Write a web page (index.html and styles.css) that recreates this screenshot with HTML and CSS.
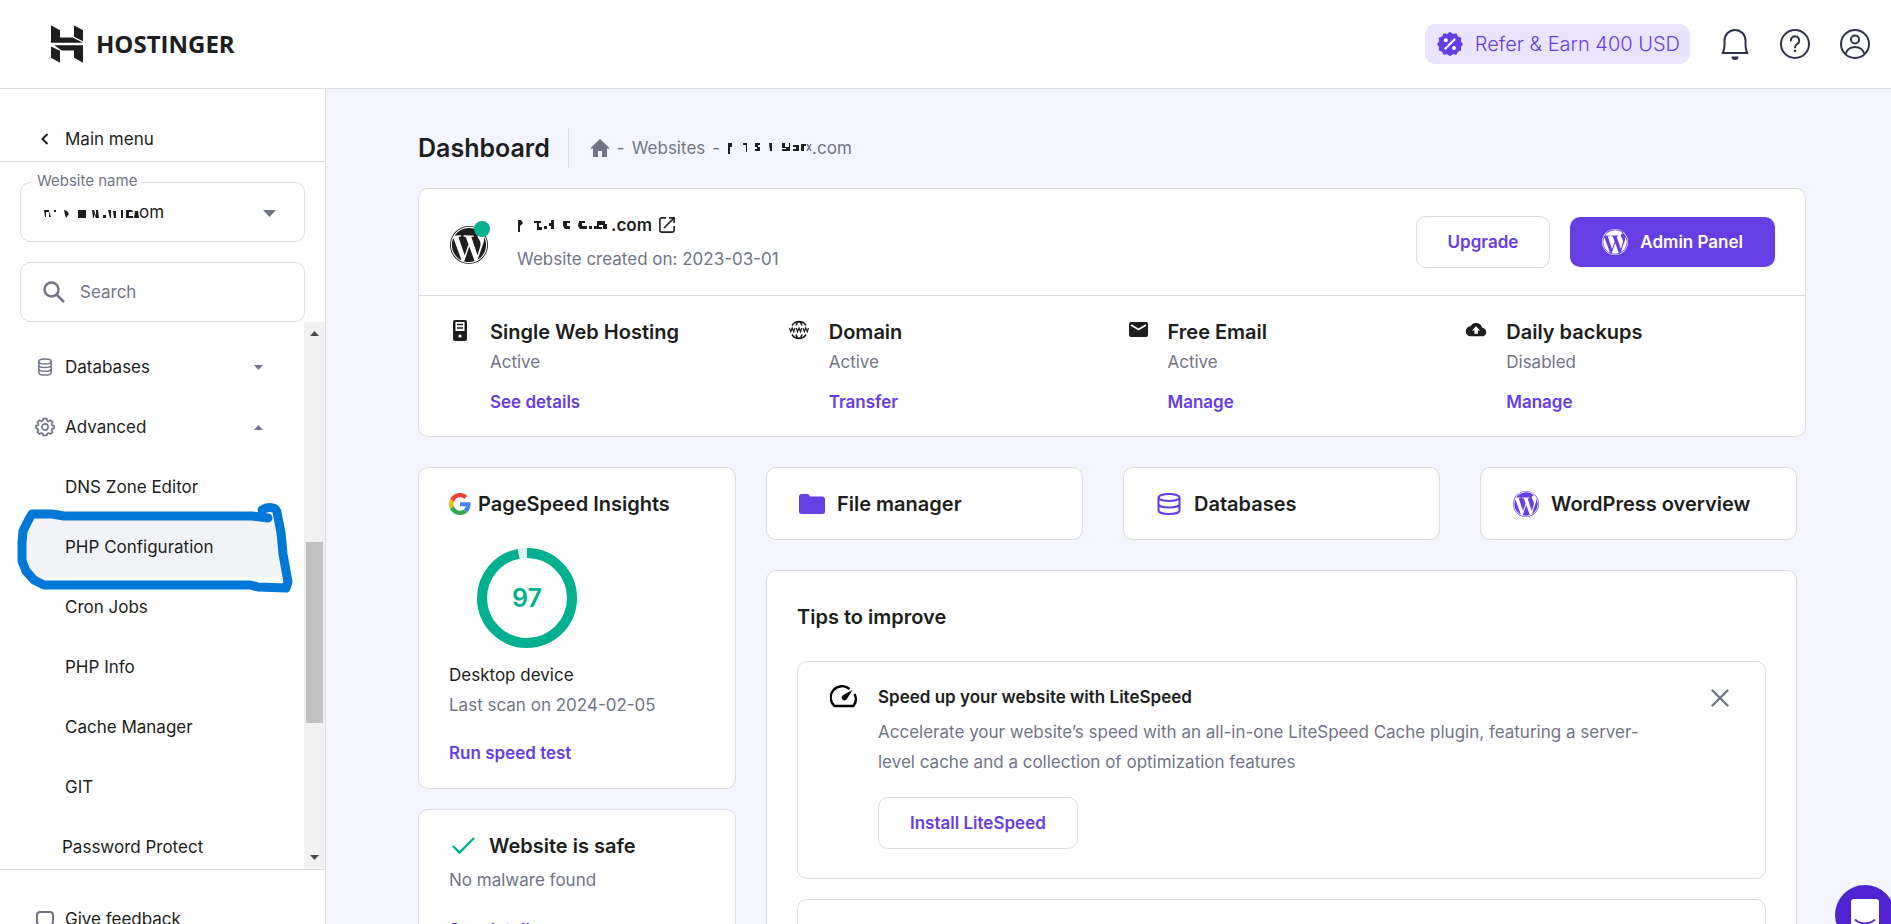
FILE: index.html
```html
<!DOCTYPE html>
<html lang="en">
<head>
<meta charset="utf-8">
<meta name="viewport" content="width=device-width, initial-scale=1">
<title>Dashboard - Hostinger</title>
<link rel="stylesheet" href="styles.css">
</head>
<body>
<svg class="defs" aria-hidden="true">
  <symbol id="wp" viewBox="0 0 24 24"><path d="M21.469 6.825c.84 1.537 1.318 3.3 1.318 5.175 0 3.979-2.156 7.456-5.363 9.325l3.295-9.527c.615-1.54.82-2.771.82-3.864 0-.405-.026-.78-.07-1.11m-7.981.105c.647-.03 1.232-.105 1.232-.105.582-.075.514-.93-.067-.899 0 0-1.755.135-2.88.135-1.064 0-2.85-.15-2.85-.15-.585-.03-.661.855-.075.885 0 0 .54.061 1.125.09l1.68 4.605-2.37 7.08L5.354 6.9c.649-.03 1.234-.1 1.234-.1.585-.075.516-.93-.065-.896 0 0-1.746.138-2.874.138-.2 0-.438-.008-.69-.015C4.911 3.15 8.235 1.215 12 1.215c2.809 0 5.365 1.072 7.286 2.833-.046-.003-.091-.009-.141-.009-1.06 0-1.812.923-1.812 1.914 0 .89.513 1.643 1.06 2.531.411.72.89 1.643.89 2.977 0 .915-.354 1.994-.821 3.479l-1.075 3.585-3.9-11.61.001.014zM12 22.784c-1.059 0-2.081-.153-3.048-.437l3.237-9.406 3.315 9.087c.024.053.05.101.078.149-1.12.393-2.325.609-3.582.609M1.211 12c0-1.564.336-3.05.935-4.39L7.29 21.709C3.694 19.96 1.212 16.271 1.211 12"/><path fill-rule="evenodd" d="M12 0a12 12 0 1 0 0 24 12 12 0 0 0 0-24m0 .55a11.450 11.450 0 1 1 0 22.900 11.450 11.450 0 0 1 0-22.900"/></symbol>
</svg>

<header class="topbar">
  <a class="brand" href="#" aria-label="Hostinger">
    <svg class="brand-mark" width="32" height="38" viewBox="0 0 96 113" aria-hidden="true"><path d="M0 0L27 15V37H65L96 53H0ZM69 0L96 15V48L69 35ZM10 60H96V113L69 98V76H32ZM0 64L27 77V113L0 98Z"/></svg>
    <span>HOSTINGER</span>
  </a>
  <div class="top-actions">
    <a class="refer" href="#">
      <svg width="26" height="26" viewBox="0 0 26 26" aria-hidden="true"><path d="M13 .8l2.900 2.100 3.500-.6 1.500 3.200 3.300 1.300-.2 3.600L26 13l-2 2.900.2 3.500-3.300 1.300-1.500 3.100-3.500-.5L13 25.300l-2.900-2-3.500.5-1.500-3.100-3.300-1.300.2-3.500L0 13l2-2.600-.2-3.600 3.300-1.300 1.500-3.200 3.500.6z" fill="#673de6"/><path d="M8.500 17.500L17.500 8.500" stroke="#fff" stroke-width="2.200" stroke-linecap="round"/><circle cx="8.800" cy="9.200" r="2" fill="#fff"/><circle cx="17" cy="17" r="2" fill="#fff"/></svg>
      <span>Refer &amp; Earn 400 USD</span>
    </a>
    <button class="icon-btn" aria-label="Notifications"><svg width="30" height="32" viewBox="0 0 30 32" fill="none" stroke="#2f334a" stroke-width="2" stroke-linejoin="round"><path d="M2.500 25C5 21.500 4.500 18 4.500 12.500a10.500 10.500 0 0 1 21 0c0 5.500-.5 9 2 12.500z"/><path d="M11.500 28.500h7a3.500 3.500 0 0 1-7 0z" fill="#2f334a" stroke="none"/></svg></button>
    <button class="icon-btn" aria-label="Help"><svg width="30" height="30" viewBox="0 0 30 30" fill="none" stroke="#2f334a" stroke-width="2"><circle cx="15" cy="15" r="14"/><path d="M10.800 11.500a4.200 4.200 0 1 1 6.700 3.300C15.800 16 15 16.700 15 18.500" stroke-linecap="round"/><circle cx="15" cy="22" r="1.300" fill="#2f334a" stroke="none"/></svg></button>
    <button class="icon-btn" aria-label="Account"><svg width="30" height="30" viewBox="0 0 30 30" fill="none" stroke="#2f334a" stroke-width="2"><circle cx="15" cy="15" r="14"/><circle cx="15" cy="10.500" r="4"/><path d="M5.500 25c1.500-4.500 5-7 9.500-7s8 2.500 9.500 7"/></svg></button>
  </div>
</header>

<div class="shell">
  <aside class="sidebar">
    <a class="back" href="#">
      <svg width="8" height="12" viewBox="0 0 8 12" fill="none" stroke="#1d1e20" stroke-width="2" aria-hidden="true"><path d="M6.500 1L1.500 6l5 5"/></svg>
      <span>Main menu</span>
    </a>
    <div class="filters">
      <div class="site-field">
        <label for="site">Website name</label>
        <select id="site"><option>om</option></select>
        <svg class="smudge-select" width="100" height="12" viewBox="0 0 100 12" fill="#1d1e20" aria-hidden="true"><path d="M1 2h5v2H3v5H2zM6 3l2 6H6zM11 2h2v2h-2zM21 2l3 1 2 3-3 4-1-3zM35 2h8v8h-8zM49 2h2l2 6V2h2l1 8h-3l-2-4v4h-1zM60 7h3v3h-3zM65 2h3v8h-1zM70 3h3v7h-2zM78 2h2v8h-2zM83 2h6l1 2h-4v4h4v2h-7zM92 3h3l1 7h-5z"/></svg>
        <svg class="caret" width="13" height="7" viewBox="0 0 13 7" fill="#727586" aria-hidden="true"><path d="M0 0h13L6.500 7z"/></svg>
      </div>
      <div class="search-field">
        <svg width="22" height="22" viewBox="0 0 22 22" fill="none" stroke="#727586" stroke-width="2.500" aria-hidden="true"><circle cx="8.500" cy="8.500" r="7"/><path d="M13.500 13.500L21 21"/></svg>
        <input type="search" placeholder="Search" aria-label="Search">
      </div>
    </div>
    <div class="scroller">
      <nav class="menu">
        <button class="item group">
          <svg width="24" height="18" viewBox="0 0 24 18" fill="none" stroke="#727586" stroke-width="1.500" aria-hidden="true"><ellipse cx="12" cy="3.500" rx="6.200" ry="2.500"/><path d="M5.800 3.500v11c0 1.400 2.800 2.600 6.200 2.600s6.200-1.200 6.200-2.600v-11M5.800 7c0 1.400 2.800 2.500 6.200 2.500s6.200-1.100 6.200-2.500M5.800 10.800c0 1.400 2.800 2.500 6.200 2.500s6.200-1.100 6.200-2.500"/></svg>
          <span>Databases</span>
          <svg class="tri" width="9" height="5" viewBox="0 0 9 5" fill="#727586" aria-hidden="true"><path d="M0 0h9L4.500 5z"/></svg>
        </button>
        <button class="item group">
          <svg width="24" height="22" viewBox="0 0 26 25" fill="none" stroke="#727586" stroke-width="1.900" stroke-linejoin="round" aria-hidden="true"><path d="M11 3h4l.6 2.500 1.400.6 2.200-1.400 2.600 2.600-1.400 2.200.5 1.200 2.400.3v3l-2.400.6-.6 1.300 1.400 2.200-2.500 2.500-2.200-1.300-1.400.6L15 22h-4l-.6-2.100-1.400-.6-2.200 1.300-2.500-2.500 1.300-2.200-.6-1.300L2.700 14v-3l2.400-.3.5-1.200-1.300-2.200 2.500-2.600L9 6.100l1.400-.6z"/><circle cx="13" cy="12.500" r="3.500"/></svg>
          <span>Advanced</span>
          <svg class="tri" width="9" height="5" viewBox="0 0 9 5" fill="#727586" aria-hidden="true"><path d="M0 5h9L4.500 0z"/></svg>
        </button>
        <a class="item" href="#">DNS Zone Editor</a>
        <div class="marked">
          <a class="item active" href="#">PHP Configuration</a>
          <svg class="marker" width="304" height="100" viewBox="0 0 304 100" fill="none" stroke="#0078d7" stroke-width="9" stroke-linecap="round" stroke-linejoin="round" aria-hidden="true"><path d="M268 21L252 19H64L52 17H32L29 22 23 34 22 45V64L26 74 34 83 44 88H250L258 90 286 91 288 85 283 57 281 36 277 15C276 10 268 9 262 13"/></svg>
        </div>
        <a class="item" href="#">Cron Jobs</a>
        <a class="item" href="#">PHP Info</a>
        <a class="item" href="#">Cache Manager</a>
        <a class="item" href="#">GIT</a>
        <a class="item wide" href="#">Password Protect</a>
      </nav>
      <div class="scrollbar" aria-hidden="true">
        <svg width="9" height="5" viewBox="0 0 9 5" fill="#494c4f"><path d="M0 5h9L4.500 0z"/></svg>
        <div class="track"><div class="thumb"></div></div>
        <svg width="9" height="5" viewBox="0 0 9 5" fill="#494c4f"><path d="M0 0h9L4.500 5z"/></svg>
      </div>
    </div>
    <a class="feedback" href="#">
      <svg width="18" height="20" viewBox="0 0 18 20" fill="none" stroke="#727586" stroke-width="2" aria-hidden="true"><path d="M4 1h10a3 3 0 0 1 3 3v7a3 3 0 0 1-3 3h-2l-3 3-3-3H4a3 3 0 0 1-3-3V4a3 3 0 0 1 3-3z"/></svg>
      <span>Give feedback</span>
    </a>
  </aside>

  <main class="content">
    <div class="heading">
      <h1>Dashboard</h1>
      <nav class="crumbs" aria-label="Breadcrumb">
        <a href="#" aria-label="Home"><svg width="20" height="18" viewBox="0 0 20 18" fill="#727586"><path d="M10 0L0 9.500h3V18h5v-6h4v6h5V9.500h3z"/></svg></a>
        <span>-</span>
        <a href="#">Websites</a>
        <span>-</span>
        <span class="masked"><svg width="85" height="16" viewBox="0 0 85 16" fill="#1d1e20" aria-hidden="true"><path d="M1 3h4v4H3v7H1zM16 3h4v9h-1V5h-3zM28 3h5v2h-2v2h2v4h-5V9h2V7h-2zM42 3h3v8h-2zM55 3h3v4h4V3h1v8h-8V9h4V8h-4zM66 5h6v6h-6V9h3V7h-3zM74 4h5v2h-2v5h-3z"/><path d="M80 4l4 7M84 4l-4 7" stroke="#727586" stroke-width="1.500"/></svg>.com</span>
      </nav>
    </div>

    <section class="card overview">
      <div class="site-row">
        <div class="site-logo">
          <svg width="38" height="38" fill="#1d1e20" aria-hidden="true"><use href="#wp"/></svg>
          <span class="status"></span>
        </div>
        <div class="site-info">
          <a class="domain" href="#"><span class="masked"><svg width="94" height="16" viewBox="0 0 94 16" fill="#1d1e20" aria-hidden="true"><path d="M1 3h3l2 3-3 3v6H1zM17 4h7v2h-2v4h3v3h-5V6h-3zM27 9h3v3h-3zM34 3h3v9h-3V9h-2V6h2zM46 4h7v2h-3v3h3v3h-5l-2-3zM62 4h6v2h-3v3h5v3h-7l-2-3zM72 9h3v3h-3zM80 4h8v3h2v5h-4V8h-4v2h3v2h-8V9h3z"/></svg>.com</span>
            <svg width="16" height="16" viewBox="0 0 16 16" fill="none" stroke="#1d1e20" stroke-width="1.600" aria-hidden="true"><path d="M7 .9H2.500A1.600 1.600 0 0 0 .9 2.500v11a1.600 1.600 0 0 0 1.600 1.600h11a1.600 1.600 0 0 0 1.600-1.600V9M10 .9h5.100V6M15 1L5 11"/></svg></a>
          <span class="muted">Website created on: 2023-03-01</span>
        </div>
        <div class="site-actions">
          <button class="btn outline">Upgrade</button>
          <button class="btn solid"><svg width="26" height="26" fill="#fff" aria-hidden="true"><use href="#wp"/></svg>Admin Panel</button>
        </div>
      </div>
      <div class="services">
        <article class="service">
          <svg width="20" height="22" viewBox="0 0 20 22" aria-hidden="true"><rect x="3" width="14" height="21" rx="2" fill="#1d1e20"/><path d="M5.500 2h9v9h-9z" fill="#fff"/><path d="M7 4.500h6M7 8h6" stroke="#1d1e20" stroke-width="1.300"/><circle cx="10" cy="16" r="1.600" fill="#fff"/></svg>
          <div><h2>Single Web Hosting</h2><p>Active</p><a href="#">See details</a></div>
        </article>
        <article class="service">
          <svg width="20" height="20" viewBox="0 0 20 20" fill="none" stroke="#1d1e20" stroke-width="1.500" aria-hidden="true"><path d="M3 5.500C4.500 3 7 1.500 10 1.500S15.500 3 17 5.500M3 14.500c1.500 2.500 4 4 7 4s5.500-1.500 7-4M7 5.500C7.700 3 9 1.700 10 1.700s2.300 1.300 3 3.800M7 14.500c.7 2.500 2 3.800 3 3.800s2.300-1.300 3-3.800"/><path stroke-width="1.200" d="M.5 8l1.200 3.800L3.200 8l1.500 3.800L5.900 8M7.300 8l1.200 3.800L10 8l1.500 3.800L12.700 8M14.100 8l1.200 3.800L16.800 8l1.500 3.800L19.500 8"/></svg>
          <div><h2>Domain</h2><p>Active</p><a href="#">Transfer</a></div>
        </article>
        <article class="service">
          <svg width="20" height="20" viewBox="0 0 20 20" aria-hidden="true"><rect x="1" y="2" width="19" height="15" rx="2" fill="#1d1e20"/><path d="M3 5l7.500 4.500L18 5" fill="none" stroke="#fff" stroke-width="1.600"/></svg>
          <div><h2>Free Email</h2><p>Active</p><a href="#">Manage</a></div>
        </article>
        <article class="service">
          <svg width="22" height="20" viewBox="0 0 22 20" aria-hidden="true"><path d="M17.700 7.600A6.900 6.900 0 0 0 4.900 6 5.500 5.500 0 0 0 5.500 17h12a4.700 4.700 0 0 0 .2-9.400z" fill="#1d1e20"/><path d="M13 10.500V14H9.300v-3.500H6.600L11 6l4.500 4.500z" fill="#fff"/></svg>
          <div><h2>Daily backups</h2><p>Disabled</p><a href="#">Manage</a></div>
        </article>
      </div>
    </section>

    <div class="lower">
      <div class="left-col">
        <section class="card pagespeed">
          <h2><svg width="22" height="22" viewBox="0 0 48 48" aria-hidden="true"><path fill="#EA4335" d="M24 9.500c3.540 0 6.710 1.220 9.210 3.600l6.850-6.850C35.900 2.380 30.470 0 24 0 14.620 0 6.510 5.380 2.560 13.220l7.980 6.190C12.430 13.720 17.740 9.500 24 9.500z"/><path fill="#4285F4" d="M46.980 24.550c0-1.570-.15-3.090-.38-4.550H24v9.020h12.940c-.58 2.960-2.260 5.480-4.780 7.180l7.730 6c4.510-4.180 7.090-10.360 7.090-17.650z"/><path fill="#FBBC05" d="M10.530 28.590c-.48-1.450-.76-2.990-.76-4.590s.27-3.140.76-4.590l-7.980-6.190C.92 16.460 0 20.120 0 24c0 3.880.92 7.540 2.560 10.780l7.970-6.190z"/><path fill="#34A853" d="M24 48c6.480 0 11.930-2.130 15.890-5.810l-7.730-6c-2.150 1.450-4.920 2.300-8.160 2.300-6.260 0-11.570-4.220-13.470-9.910l-7.980 6.190C6.510 42.620 14.620 48 24 48z"/></svg>PageSpeed Insights</h2>
          <div class="gauge">
            <svg width="100" height="100" viewBox="0 0 100 100" fill="none" stroke-width="10" aria-hidden="true"><circle cx="50" cy="50" r="45" stroke="#def4f0"/><circle cx="50" cy="50" r="45" stroke="#00b090" pathLength="100" stroke-dasharray="97 3" transform="rotate(-90 50 50)"/></svg>
            <strong>97</strong>
          </div>
          <p>Desktop device</p>
          <p class="muted">Last scan on 2024-02-05</p>
          <a href="#">Run speed test</a>
        </section>
        <section class="card safe">
          <h2><svg width="30" height="22" viewBox="0 0 30 22" fill="none" stroke="#00b090" stroke-width="2.400" aria-hidden="true"><path d="M4 11l6.500 6.500L25 3"/></svg>Website is safe</h2>
          <p class="muted">No malware found</p>
          <a href="#">See details</a>
        </section>
      </div>
      <div class="right-col">
        <div class="shortcuts">
          <a class="card shortcut" href="#"><svg width="28" height="26" viewBox="0 0 28 26" fill="#673de6" aria-hidden="true"><path d="M3.500 3H10l2.500 2.500h12A2.500 2.500 0 0 1 27 8v12.500a2.500 2.500 0 0 1-2.500 2.500h-21A2.500 2.500 0 0 1 1 20.500v-15A2.500 2.500 0 0 1 3.500 3z"/></svg>File manager</a>
          <a class="card shortcut" href="#"><svg width="28" height="26" viewBox="0 0 28 26" fill="none" stroke="#673de6" stroke-width="2" aria-hidden="true"><ellipse cx="14" cy="6.500" rx="10.500" ry="3.500"/><path d="M3.500 6.500v13c0 2 4.700 3.500 10.500 3.500s10.500-1.500 10.500-3.500v-13M3.500 13c0 2 4.700 3.500 10.500 3.500S24.500 15 24.500 13"/></svg>Databases</a>
          <a class="card shortcut" href="#"><svg width="28" height="26" fill="#673de6" aria-hidden="true"><use href="#wp"/></svg>WordPress overview</a>
        </div>
        <section class="card tips">
          <h2>Tips to improve</h2>
          <article class="tip">
            <svg width="28" height="24" viewBox="0 0 28 24" fill="none" stroke="#000" stroke-width="2.400" aria-hidden="true"><path d="M19.500 4A11.300 11.300 0 0 0 4.500 21h19a11.300 11.300 0 0 0 1-12"/><path d="M22.500 5l-6 9.500a2.800 2.800 0 0 1-4-4z" fill="#000" stroke="none"/></svg>
            <div class="tip-body">
              <h3>Speed up your website with LiteSpeed</h3>
              <p class="muted">Accelerate your website’s speed with an all-in-one LiteSpeed Cache plugin, featuring a server-level cache and a collection of optimization features</p>
              <button class="btn outline">Install LiteSpeed</button>
            </div>
            <button class="icon-btn close" aria-label="Dismiss"><svg width="18" height="18" viewBox="0 0 18 18" stroke="#727586" stroke-width="2.400" stroke-linecap="round"><path d="M1.500 1.500l15 15M16.500 1.500l-15 15"/></svg></button>
          </article>
          <article class="tip next"></article>
        </section>
      </div>
    </div>
  </main>
</div>

<button class="chat" aria-label="Open chat"><svg width="28" height="34" viewBox="0 0 28 34" aria-hidden="true"><path d="M3 0h22a3 3 0 0 1 3 3v31l-6-4H3a3 3 0 0 1-3-3V3a3 3 0 0 1 3-3z" fill="#fff"/><path d="M4.500 21c5.500 4.500 13.500 4.500 19 0" fill="none" stroke="#4f23d1" stroke-width="1.800" stroke-linecap="round"/></svg></button>
</body>
</html>
```
FILE: styles.css
```css
* { box-sizing: border-box; }

body {
  margin: 0;
  height: 100vh;
  display: flex;
  flex-direction: column;
  overflow: hidden;
  font: 400 17px/30px Inter, "Open Sans", sans-serif;
  color: #1d1e20;
  background: #f4f5ff;
}

h1, h2, h3, p { margin: 0; }
a { color: inherit; text-decoration: none; }
button, input, select { font: inherit; color: inherit; }
button { cursor: pointer; }
svg { display: block; flex: none; }
.defs { position: absolute; width: 0; height: 0; }
.muted { color: #727586; }

.topbar {
  flex: none;
  height: 89px;
  padding: 0 21px 0 51px;
  display: flex;
  align-items: center;
  justify-content: space-between;
  background: #fff;
  border-bottom: 1px solid #dadce0;
}
.brand {
  display: flex;
  align-items: center;
  gap: 13px;
  font: 700 24px/30px "Open Sans", sans-serif;
}
.brand-mark { fill: #1d1e20; }
.top-actions { display: flex; align-items: center; gap: 30px; }
.refer {
  display: flex;
  align-items: center;
  gap: 12px;
  height: 40px;
  padding: 0 10px 0 12px;
  border-radius: 10px;
  background: #ebe4ff;
  color: #673de6;
  font-size: 20px;
  font-weight: 300;
}
.icon-btn {
  width: 30px;
  height: 32px;
  padding: 0;
  border: 0;
  background: none;
  display: grid;
  place-items: center;
}

.shell { flex: 1; min-height: 0; display: flex; }
.sidebar {
  flex: none;
  width: 326px;
  display: flex;
  flex-direction: column;
  background: #fff;
  border-right: 1px solid #dadce0;
}
.back {
  display: flex;
  align-items: center;
  gap: 16px;
  padding: 35px 0 7px 41px;
  border-bottom: 1px solid #dadce0;
}
.filters {
  display: grid;
  grid-template-columns: minmax(0, 1fr);
  gap: 20px;
  padding: 20px 20px 0;
}
.site-field, .search-field {
  position: relative;
  height: 60px;
  border: 1px solid #dadce0;
  border-radius: 10px;
}
.site-field label {
  position: absolute;
  top: -12px;
  left: 10px;
  padding: 0 6px;
  background: #fff;
  color: #727586;
  font-size: 15px;
  line-height: 20px;
}
.site-field select {
  width: 100%;
  height: 100%;
  padding: 0 0 0 118px;
  border: 0;
  background: none;
  appearance: none;
}
.smudge-select { position: absolute; left: 22px; top: 25px; }
.caret { position: absolute; right: 28px; top: 27px; }
.search-field {
  display: flex;
  align-items: center;
  gap: 15px;
  padding: 0 22px;
}
.search-field input {
  flex: 1;
  min-width: 0;
  padding: 0;
  border: 0;
  background: none;
}
.search-field input::placeholder { color: #727586; opacity: 1; }

.scroller {
  flex: 1;
  min-height: 0;
  display: flex;
  border-bottom: 1px solid #dadce0;
}
.menu { flex: 1; padding-top: 15px; overflow: hidden; }
.item {
  display: flex;
  align-items: center;
  height: 60px;
  padding-left: 65px;
}
.item.wide { padding-left: 62px; }
.item.group {
  width: 100%;
  gap: 8px;
  padding: 0 41px 0 33px;
  border: 0;
  background: none;
}
.tri { margin-left: auto; }
.marked { position: relative; }
.item.active {
  margin: 0 20px;
  padding-left: 45px;
  border-radius: 10px;
  background: #f2f3f6;
}
.marker { position: absolute; left: 0; top: -20px; pointer-events: none; }
.scrollbar {
  width: 21px;
  padding: 9px 2px;
  display: flex;
  flex-direction: column;
  align-items: center;
  gap: 5px;
  background: #f1f1f1;
}
.track { flex: 1; width: 100%; padding-top: 201px; }
.thumb { height: 181px; background: #c1c1c1; }
.feedback {
  flex: none;
  height: 54px;
  padding: 34px 0 0 36px;
  display: flex;
  gap: 11px;
  overflow: hidden;
}
.feedback svg { margin-top: 7px; }

.content {
  flex: 1;
  min-width: 0;
  padding: 39px 85px 0 92px;
  overflow: hidden;
}
.card {
  background: #fff;
  border: 1px solid #dadce0;
  border-radius: 10px;
}
.heading { display: flex; align-items: center; height: 40px; }
.heading h1 {
  font-size: 25px;
  font-weight: 600;
  line-height: 40px;
  padding-right: 18px;
  border-right: 1px solid #dadce0;
}
.crumbs {
  display: flex;
  align-items: center;
  gap: 7px;
  margin-left: 21px;
  color: #727586;
}
.masked { display: flex; align-items: center; }

.overview { margin-top: 20px; }
.site-row {
  display: flex;
  align-items: center;
  height: 107px;
  padding: 0 30px 0 31px;
  border-bottom: 1px solid #dadce0;
}
.site-logo { position: relative; margin-top: 5px; }
.status {
  position: absolute;
  top: -5px;
  left: 24px;
  width: 16px;
  height: 16px;
  border-radius: 50%;
  background: #00b090;
}
.site-info {
  display: grid;
  gap: 4px;
  margin-left: 29px;
}
.domain { display: flex; align-items: center; gap: 7px; font-weight: 600; }
.site-actions { margin-left: auto; display: flex; align-items: center; gap: 20px; }
.btn {
  display: flex;
  align-items: center;
  gap: 12px;
  height: 52px;
  padding: 0 31px;
  border-radius: 10px;
  font-weight: 600;
}
.btn.outline { border: 1px solid #dadce0; background: #fff; color: #673de6; }
.btn.solid { height: 50px; border: 0; background: #673de6; color: #fff; padding: 0 32px; }

.services {
  display: grid;
  grid-template-columns: repeat(4, 1fr);
  padding: 21px 0 19px 31px;
}
.service { display: flex; gap: 20px; }
.service > svg { width: 20px; margin-top: 3px; overflow: visible; }
.service p { color: #727586; }
.service a { display: block; margin-top: 10px; }
.service a, .pagespeed a, .safe a { font-weight: 600; color: #673de6; }
h2 { font-size: 20px; font-weight: 600; line-height: 30px; }

.lower {
  display: grid;
  grid-template-columns: 318fr 1031fr;
  gap: 30px;
  margin: 30px 9px 0 0;
}
.left-col { display: grid; gap: 20px; align-content: start; }
.pagespeed, .safe { padding: 21px 30px 20px; }
.pagespeed h2, .safe h2 { display: flex; align-items: center; gap: 7px; }
.safe h2 { gap: 10px; }
.pagespeed a { display: block; margin-top: 18px; }
.safe a { display: block; margin-top: 20px; }
.gauge {
  display: grid;
  place-items: center;
  width: 100px;
  margin: 29px 0 12px 28px;
}
.gauge > * { grid-area: 1 / 1; }
.gauge strong { font-size: 25px; font-weight: 600; color: #00b090; }
.safe p { margin-top: 4px; }

.shortcuts { display: grid; grid-template-columns: repeat(3, 1fr); gap: 40px; }
.shortcut {
  display: flex;
  align-items: center;
  gap: 11px;
  height: 73px;
  padding-left: 31px;
  font-size: 20px;
  font-weight: 600;
}
.tips { margin-top: 30px; padding: 31px 30px 30px; }
.tip {
  display: flex;
  gap: 20px;
  margin-top: 29px;
  padding: 20px 36px 29px 32px;
  border: 1px solid #dadce0;
  border-radius: 10px;
}
.tip > svg { margin-top: 3px; }
.tip.next { margin-top: 20px; height: 160px; }
.tip-body { flex: 1; max-width: 780px; }
.tip h3 { font-size: 17px; font-weight: 600; }
.tip p { margin: 5px 0 20px; }
.close { margin-left: auto; width: 18px; }

.chat {
  position: fixed;
  right: -4px;
  bottom: -21px;
  width: 60px;
  height: 60px;
  padding: 14px 16px;
  border: 0;
  border-radius: 50%;
  background: #4f23d1;
}
```
